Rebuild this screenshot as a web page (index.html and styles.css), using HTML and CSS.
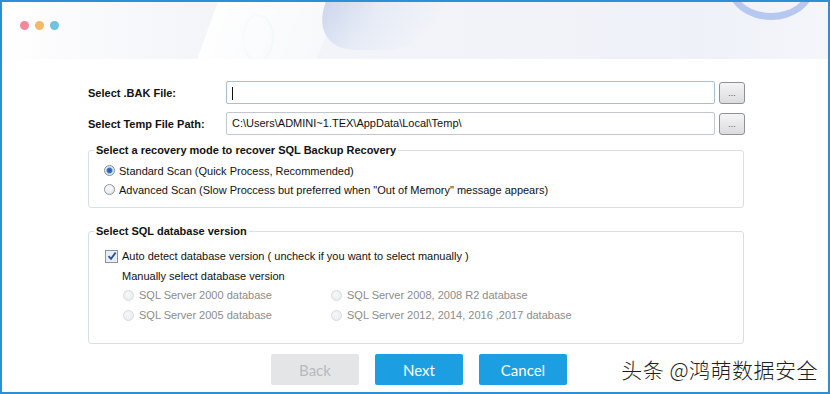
FILE: index.html
```html
<!DOCTYPE html>
<html>
<head>
<meta charset="utf-8">
<link rel="stylesheet" href="styles.css">
</head>
<body>
<div class="window">
  <header class="header">
    <div class="dots"><span class="dot red"></span><span class="dot orange"></span><span class="dot blue"></span></div>
    <span class="deco ring-small"></span>
    <span class="deco slant"></span>
    <span class="deco blob"></span>
    <span class="deco ring-big"></span>
  </header>
  <main class="content">
    <div class="file-row">
      <label class="label">Select .BAK File:</label>
      <div class="input focus"><span class="caret"></span></div>
      <button class="browse">...</button>
    </div>
    <div class="file-row">
      <label class="label">Select Temp File Path:</label>
      <div class="input">C:\Users\ADMINI~1.TEX\AppData\Local\Temp\</div>
      <button class="browse">...</button>
    </div>

    <fieldset class="group group-mode">
      <legend>Select a recovery mode to recover SQL Backup Recovery</legend>
      <div class="opt"><span class="radio checked"></span>Standard Scan (Quick Process, Recommended)</div>
      <div class="opt opt-2"><span class="radio"></span>Advanced Scan (Slow Proccess but preferred when "Out of Memory" message appears)</div>
    </fieldset>

    <fieldset class="group group-version">
      <legend>Select SQL database version</legend>
      <div class="opt check-row"><span class="checkbox"><svg width="10" height="10" viewBox="0 0 10 10"><path d="M1.5 5.2 L4 7.8 L8.6 1.6" fill="none" stroke="#2b4e9a" stroke-width="1.8"/></svg></span>Auto detect database version ( uncheck if you want to select manually )</div>
      <div class="manual">Manually select database version</div>
      <div class="versions">
        <div class="opt disabled"><span class="radio off"></span>SQL Server 2000 database</div>
        <div class="opt disabled"><span class="radio off"></span>SQL Server 2008, 2008 R2 database</div>
        <div class="opt disabled"><span class="radio off"></span>SQL Server 2005 database</div>
        <div class="opt disabled"><span class="radio off"></span>SQL Server 2012, 2014, 2016 ,2017 database</div>
      </div>
    </fieldset>

    <div class="actions">
      <button class="btn btn-back">Back</button>
      <button class="btn btn-primary">Next</button>
      <button class="btn btn-primary">Cancel</button>
    </div>
  </main>
  <div class="watermark">头条 @鸿萌数据安全</div>
</div>
</body>
</html>
```
FILE: styles.css
```css
* { box-sizing: border-box; }
html, body { margin: 0; padding: 0; }
body { width: 830px; height: 394px; overflow: hidden; background: #fff; }

.window {
  position: relative;
  width: 830px;
  height: 394px;
  border: 2px solid #2d8fd5;
  background: #fff;
  font-family: "Liberation Sans", Arial, sans-serif;
  font-size: 11px;
  color: #111;
  overflow: hidden;
}

.header {
  position: relative;
  height: 57px;
  background: linear-gradient(90deg, #ffffff 0px, #fbfbfd 60px, #f3f5f9 200px, #f1f3f8 500px, #eef1f8 700px, #f4f6fa 830px);
  overflow: hidden;
}
.dots { display: flex; gap: 6px; padding: 19px 0 0 18px; }
.dot { width: 9px; height: 9px; border-radius: 50%; display: block; }
.red { background: #f0899a; }
.orange { background: #f5b866; }
.blue { background: #6fc3de; }

.deco { position: absolute; display: block; }
.ring-small {
  left: 240px; top: 12px; width: 32px; height: 48px;
  border: 2px solid #dcefef; border-radius: 50%;
}
.slant {
  left: 205px; top: -20px; width: 120px; height: 100px;
  background: linear-gradient(90deg, rgba(255,255,255,0.9), rgba(255,255,255,0.4));
  transform: skewX(-20deg);
}
.blob {
  left: 326px; top: -60px; width: 120px; height: 108px;
  border-radius: 0 0 30px 60px;
  background: linear-gradient(100deg, #c9d3ec 0%, #e6ebf6 50%, rgba(240,243,249,0) 100%);
  transform: skewX(-30deg);
}
.ring-big {
  left: 726px; top: -48px; width: 86px; height: 66px;
  border: 7px solid #b6c8f0; border-radius: 50%;
}

.content { padding: 22px 0 0 86px; width: 744px; }

.file-row { display: flex; align-items: center; height: 23px; margin-bottom: 8px; }
.label { width: 138px; font-weight: bold; font-size: 11px; color: #111; }
.input {
  width: 489px; height: 23px;
  border: 1px solid #c3c7cb; border-radius: 2px;
  background: #fff;
  padding: 0 5px; line-height: 21px; font-size: 11px; color: #111;
  white-space: nowrap; overflow: hidden;
}
.input.focus { border-color: #a7bfd8; }
.caret { display: inline-block; width: 1px; height: 13px; background: #111; vertical-align: middle; }
.browse {
  margin-left: 4px; width: 26px; height: 22px; padding: 0;
  border: 1px solid #8e9296; border-radius: 3px;
  background: linear-gradient(#f4f4f4, #dcdcdc);
  font-family: "Liberation Sans", Arial, sans-serif; font-size: 9px; color: #555;
  line-height: 18px;
}

.group {
  margin: 0; border: 1px solid #d9dfe4; border-radius: 3px;
  width: 656px;
}
.group legend {
  font-weight: bold; font-size: 11px; color: #111;
  padding: 0 2px; margin-left: -10px; line-height: 14px;
}
.group-mode { margin-top: 3px; padding: 4px 10px 8px 15px; height: 65px; }
.opt-2 { height: 20px; }
.group-version { margin-top: 16px; padding: 3px 10px 10px 16px; height: 120px; }
.group-version legend { margin-left: -11px; }

.opt { display: flex; align-items: center; height: 19px; white-space: nowrap; }
.radio {
  width: 11px; height: 11px; border-radius: 50%;
  border: 1px solid #8e9aa5;
  background: radial-gradient(circle at 40% 35%, #ffffff 0%, #e9ecef 60%, #cfd5da 100%);
  margin-right: 4px; flex: none;
}
.radio.checked {
  background: radial-gradient(circle, #1e4fa8 0px, #3f78c9 2.5px, #e6ecf4 3.5px, #d4dbe3 100%);
  border-color: #7f8ea0;
}
.radio.off {
  border-color: #d8dcdf;
  background: radial-gradient(circle at 40% 35%, #f6f7f8 0%, #e8eaec 100%);
  margin-right: 5px;
}
.disabled { color: #8c8c8c; }

.check-row { height: 20px; margin-top: 5px; }
.checkbox {
  width: 13px; height: 13px; border: 1px solid #8a95a8; background: #e9eef6;
  display: flex; align-items: center; justify-content: center; margin-right: 4px; flex: none;
}
.manual { padding-left: 17px; height: 19px; line-height: 21px; }
.versions {
  display: grid; grid-template-columns: 208px auto; padding-left: 18px;
}
.versions .opt { height: 20px; }

.actions { display: flex; gap: 16px; padding-left: 183px; margin-top: 10px; }
.btn {
  width: 88px; height: 31px; border: none; border-radius: 2px;
  font-family: "Lato", "Open Sans", sans-serif; font-size: 15px;
}
.btn-back { background: #e3e5e7; color: #b6babe; }
.btn-primary { background: #1b9ee2; color: #fff; }

.watermark {
  position: absolute; right: 10px; bottom: 8px;
  font-family: "Noto Sans CJK SC", sans-serif; font-size: 21px; font-weight: 300; color: #1d1d1d;
  letter-spacing: 0.5px;
}
```
